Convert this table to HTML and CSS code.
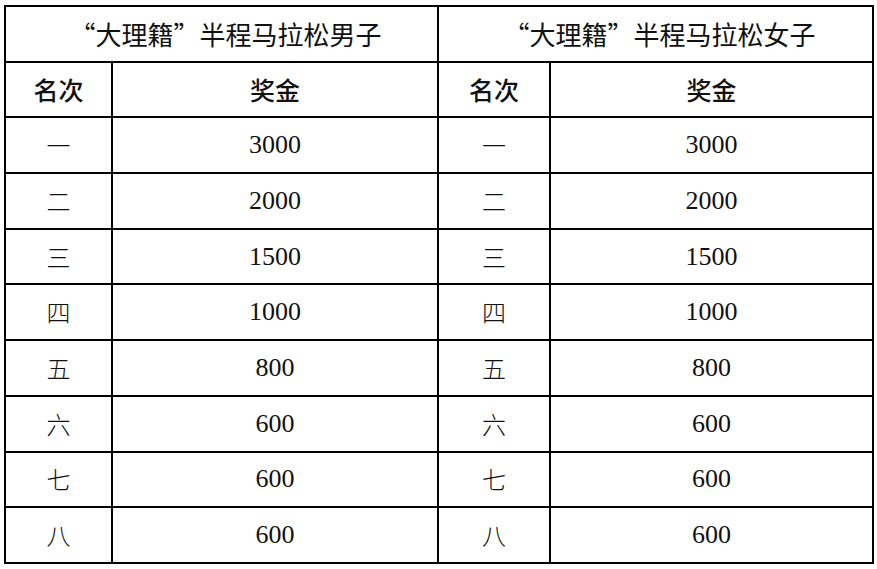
FILE: index.html
```html
<!DOCTYPE html>
<html lang="zh">
<head>
<meta charset="utf-8">
<title>大理籍半程马拉松奖金</title>
<link rel="stylesheet" href="styles.css">
</head>
<body>
<table class="prize">
  <colgroup>
    <col class="c-rank"><col class="c-money"><col class="c-rank2"><col class="c-money2">
  </colgroup>
  <tr class="title-row">
    <td colspan="2">“大理籍”半程马拉松男子</td>
    <td colspan="2">“大理籍”半程马拉松女子</td>
  </tr>
  <tr class="head-row">
    <td>名次</td><td>奖金</td><td>名次</td><td>奖金</td>
  </tr>
  <tr><td>一</td><td class="num">3000</td><td>一</td><td class="num">3000</td></tr>
  <tr><td>二</td><td class="num">2000</td><td>二</td><td class="num">2000</td></tr>
  <tr><td>三</td><td class="num">1500</td><td>三</td><td class="num">1500</td></tr>
  <tr><td>四</td><td class="num">1000</td><td>四</td><td class="num">1000</td></tr>
  <tr><td>五</td><td class="num">800</td><td>五</td><td class="num">800</td></tr>
  <tr><td>六</td><td class="num">600</td><td>六</td><td class="num">600</td></tr>
  <tr><td>七</td><td class="num">600</td><td>七</td><td class="num">600</td></tr>
  <tr><td>八</td><td class="num">600</td><td>八</td><td class="num">600</td></tr>
</table>
</body>
</html>
```
FILE: styles.css
```css
html, body {
  margin: 0;
  background: #fff;
}
body {
  padding: 5px 0 0 4px;
  font-family: "Liberation Serif", "Noto Sans CJK SC", serif;
  color: #111;
}
.prize {
  border-collapse: collapse;
  table-layout: fixed;
  width: 868px;
}
.c-rank { width: 107px; }
.c-money { width: 326px; }
.c-rank2 { width: 112px; }
.c-money2 { width: 323px; }
.prize td {
  border: 2px solid #000;
  height: 53.7px;
  padding: 0;
  text-align: center;
  vertical-align: middle;
  font-size: 24px;
  line-height: 1;
  font-family: "Noto Sans CJK SC", sans-serif;
  font-weight: 300;
}
.prize td.num {
  font-family: "Liberation Serif", serif;
  font-weight: normal;
  font-size: 26px;
}
.title-row td {
  font-size: 26px;
  font-weight: 400;
  padding-left: 8px;
}
.head-row td {
  font-size: 25px;
  font-weight: 500;
}
```
